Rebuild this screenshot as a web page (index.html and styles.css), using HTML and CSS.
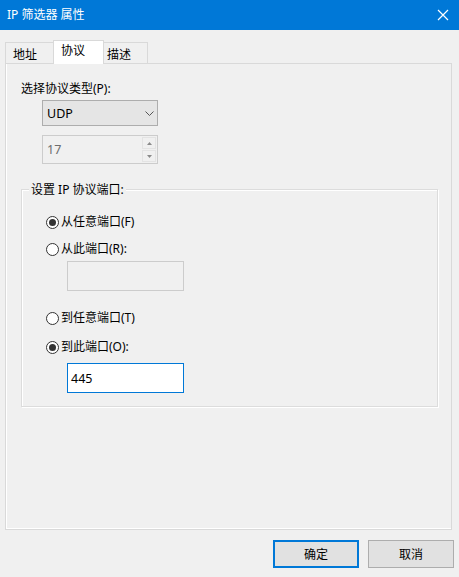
FILE: index.html
```html
<!DOCTYPE html>
<html lang="zh-CN">
<head>
<meta charset="utf-8">
<title>IP 筛选器 属性</title>
<link rel="stylesheet" href="styles.css">
</head>
<body>
<div class="dialog">
  <div class="titlebar">
    <span class="title">IP 筛选器 属性</span>
    <svg class="close" width="12" height="12" viewBox="0 0 12 12"><path d="M1 1L11 11M11 1L1 11" stroke="#fff" stroke-width="1.2" fill="none"/></svg>
  </div>
  <div class="tabs">
    <div class="tab tab-addr">地址</div>
    <div class="tab tab-proto active">协议</div>
    <div class="tab tab-desc">描述</div>
  </div>
  <div class="panel">
    <div class="label">选择协议类型(P):</div>
    <div class="select">
      <span>UDP</span>
      <svg class="chev" width="9" height="5" viewBox="0 0 9 5"><path d="M0.5 0.5L4.5 4.5L8.5 0.5" stroke="#555" stroke-width="1" fill="none"/></svg>
    </div>
    <div class="spin">
      <span class="spin-val">17</span>
      <div class="spin-btns">
        <div class="spin-btn"><svg width="5" height="3" viewBox="0 0 5 3"><path d="M0 3L2.5 0L5 3Z" fill="#8a8a8a"/></svg></div>
        <div class="spin-btn"><svg width="5" height="3" viewBox="0 0 5 3"><path d="M0 0L2.5 3L5 0Z" fill="#8a8a8a"/></svg></div>
      </div>
    </div>
    <fieldset class="group">
      <legend>设置 IP 协议端口:</legend>
      <div class="radio r1"><span class="dot checked"></span>从任意端口(F)</div>
      <div class="radio r2"><span class="dot"></span>从此端口(R):</div>
      <div class="textbox disabled tb1"></div>
      <div class="radio r3"><span class="dot"></span>到任意端口(T)</div>
      <div class="radio r4"><span class="dot checked"></span>到此端口(O):</div>
      <div class="textbox focused tb2">445</div>
    </fieldset>
  </div>
  <div class="footer">
    <div class="btn primary">确定</div>
    <div class="btn">取消</div>
  </div>
</div>
</body>
</html>
```

FILE: styles.css
```css
html, body {
  margin: 0;
  padding: 0;
  background: #f0f0f0;
}
body {
  font-family: "Noto Sans", "Noto Sans CJK SC", sans-serif;
  font-size: 12px;
  color: #000;
}
.dialog {
  width: 459px;
  height: 577px;
  display: flex;
  flex-direction: column;
  background: #f0f0f0;
}
.titlebar {
  height: 30px;
  background: #0078d7;
  display: flex;
  align-items: center;
  justify-content: space-between;
  padding: 0 8px 1px 7px;
  box-sizing: border-box;
  color: #fff;
}
.title {
  font-size: 12px;
  line-height: 15px;
}
.close {
  margin-right: 2px;
}
.tabs {
  display: flex;
  align-items: flex-end;
  margin-top: 10px;
  padding-left: 5px;
  height: 23px;
  position: relative;
  z-index: 1;
}
.tab {
  box-sizing: border-box;
  height: 21px;
  border: 1px solid #d9d9d9;
  border-bottom: none;
  background: #f0f0f0;
  line-height: 15px;
  padding-top: 4px;
  padding-left: 7px;
}
.tab-addr { width: 50px; }
.tab-proto { width: 47px; }
.tab-desc { width: 46px; padding-left: 5px; border-left: none; }
.tab.active {
  height: 24px;
  margin: 0 -2px -1px -2px;
  width: 51px;
  background: #fff;
  padding-top: 2px;
  padding-left: 7px;
  position: relative;
  z-index: 2;
}
.panel {
  box-sizing: border-box;
  margin-left: 5px;
  width: 447px;
  height: 467px;
  border: 1px solid #d9d9d9;
  box-shadow: inset 1px 0 #fff, inset 0 -1px #fff;
  background: #f0f0f0;
  padding: 17px 13px 0 15px;
  display: flex;
  flex-direction: column;
  align-items: flex-start;
}
.label {
  line-height: 15px;
}
.select {
  box-sizing: border-box;
  margin: 4px 0 0 21px;
  width: 116px;
  height: 26px;
  border: 1px solid #adadad;
  background: #e5e5e5;
  display: flex;
  align-items: center;
  justify-content: space-between;
  padding: 0 3px 0 4px;
  font-size: 12.5px;
}
.spin {
  box-sizing: border-box;
  margin: 9px 0 0 21px;
  width: 116px;
  height: 29px;
  border: 1px solid #cccccc;
  background: #f0f0f0;
  display: flex;
  justify-content: space-between;
  color: #6d6d6d;
  font-size: 12.5px;
}
.spin-val {
  padding: 5px 0 0 4px;
}
.spin-btns {
  display: flex;
  flex-direction: column;
  width: 14px;
  margin: 1px;
  gap: 1px;
}
.spin-btn {
  flex: 1;
  display: flex;
  align-items: center;
  justify-content: center;
  background: #f0f0f0;
  border: 1px solid #e3e3e3;
}
.group {
  box-sizing: border-box;
  margin: 18px 0 0 0;
  width: 417px;
  height: 225px;
  border: 1px solid #dcdcdc;
  box-shadow: 1px 1px #fff, inset 1px 1px #fff;
  padding: 0 0 0 24px;
  min-width: 0;
}
.group legend {
  padding: 0 2px;
  margin-left: -17px;
  line-height: 15px;
  background: #f0f0f0;
}
.radio {
  display: flex;
  align-items: center;
  line-height: 16px;
  height: 16px;
}
.r1 { margin-top: 17px; }
.r2 { margin-top: 11px; }
.r3 { margin-top: 19px; }
.r4 { margin-top: 13px; }
.dot {
  box-sizing: border-box;
  width: 13px;
  height: 13px;
  border: 1px solid #333;
  border-radius: 50%;
  background: #fff;
  margin-right: 2px;
  display: flex;
  align-items: center;
  justify-content: center;
}
.dot.checked::after {
  content: "";
  width: 7px;
  height: 7px;
  border-radius: 50%;
  background: #333;
}
.textbox {
  box-sizing: border-box;
  margin-left: 21px;
  width: 117px;
  height: 30px;
  padding: 6px 0 0 3px;
  font-size: 12.5px;
}
.textbox.disabled {
  border: 1px solid #cccccc;
  background: #f0f0f0;
}
.tb1 { margin-top: 4px; }
.textbox.focused {
  border: 1px solid #0078d7;
  background: #fff;
}
.tb2 { margin-top: 8px; }
.footer {
  display: flex;
  justify-content: flex-end;
  gap: 9px;
  padding: 10px 5px 0 0;
}
.btn {
  box-sizing: border-box;
  width: 86px;
  height: 28px;
  border: 1px solid #adadad;
  background: #e1e1e1;
  display: flex;
  align-items: center;
  justify-content: center;
}
.btn.primary {
  border: 2px solid #0078d7;
}
```
